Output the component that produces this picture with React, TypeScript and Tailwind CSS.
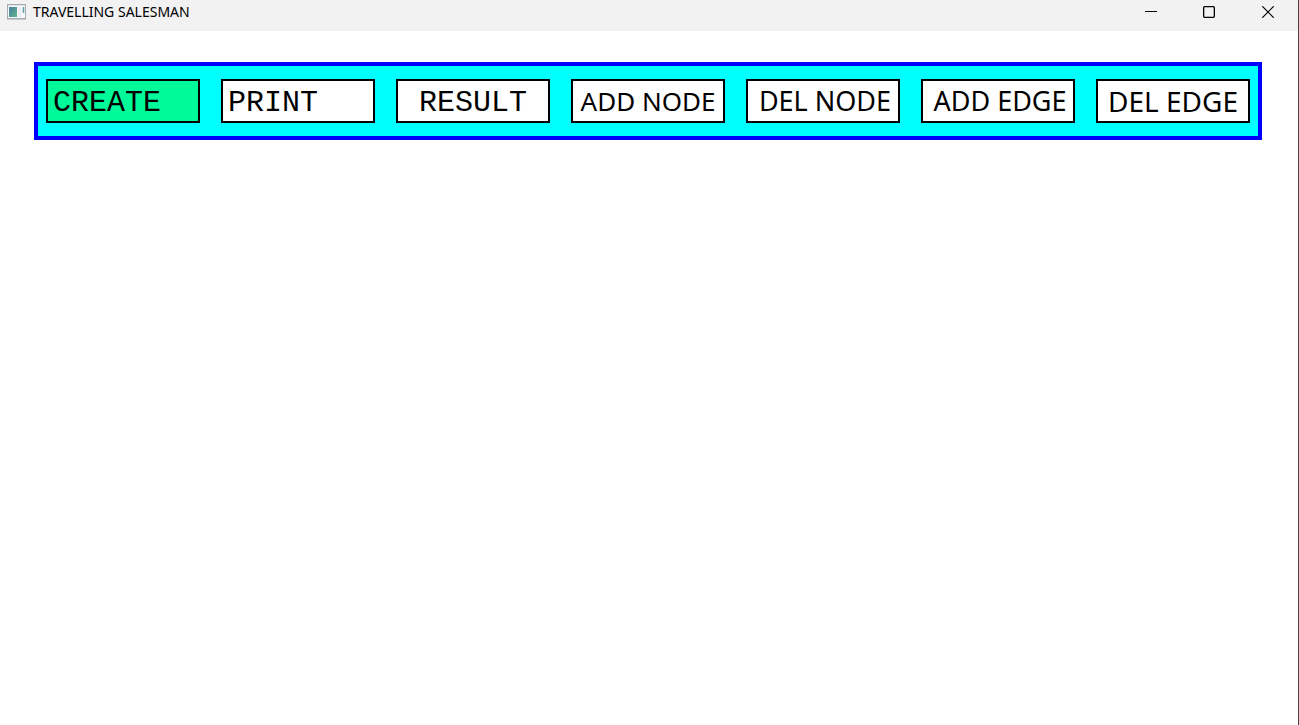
import React from "react";

type Action = { label: string; look: string };

const actions: Action[] = [
  { label: "CREATE", look: "bg-[#00fa9a] justify-start pt-1 pl-[5px] font-['Liberation_Mono',monospace] text-[30px]" },
  { label: "PRINT", look: "bg-white justify-start pt-1 pl-[5px] font-['Liberation_Mono',monospace] text-[30px]" },
  { label: "RESULT", look: "bg-white justify-center pt-1 font-['Liberation_Mono',monospace] text-[30px]" },
  { label: "ADD NODE", look: "bg-white justify-center font-['Noto_Sans',sans-serif] text-[26px]" },
  { label: "DEL NODE", look: "bg-white justify-center pl-1 font-['Noto_Sans',sans-serif] text-[27px]" },
  { label: "ADD EDGE", look: "bg-white justify-center pl-1 font-['Noto_Sans',sans-serif] text-[27px]" },
  { label: "DEL EDGE", look: "bg-white justify-center font-['Noto_Sans',sans-serif] text-[28px]" },
];

function AppIcon() {
  return (
    <svg width="19" height="16" viewBox="0 0 19 16" aria-hidden="true">
      <defs>
        <linearGradient id="pane" x1="0" y1="0" x2="1" y2="1">
          <stop offset="0" stopColor="#4a7fa5" />
          <stop offset="1" stopColor="#5cb584" />
        </linearGradient>
      </defs>
      <rect x="0.5" y="0.5" width="18" height="14" fill="#f8f9fb" stroke="#a5abb5" />
      <path d="M0 15.5h19" stroke="#c9ccd1" />
      <path d="M1 1.5h17" stroke="#dde3ea" />
      <rect x="2" y="3" width="8" height="10" fill="url(#pane)" />
      <rect x="11" y="3" width="4" height="10" fill="#eceef2" />
      <path d="M16.5 3v6" stroke="#5d9fa0" strokeWidth="1.5" />
    </svg>
  );
}

function TitleBar() {
  return (
    <header className="flex h-[31px] items-start justify-between bg-[#f2f2f2] pl-[7px]">
      <div className="flex h-6 items-center gap-[7px]">
        <AppIcon />
        <h1 className="font-['Noto_Sans',sans-serif] text-[14px] leading-6 text-black">
          TRAVELLING SALESMAN
        </h1>
      </div>
      <div className="flex h-6">
        <button type="button" aria-label="Minimize" className="flex w-[58px] items-center justify-center">
          <svg width="12" height="12" viewBox="0 0 12 12" fill="none" stroke="#000">
            <path d="M0 5.5h12" />
          </svg>
        </button>
        <button type="button" aria-label="Maximize" className="flex w-[58px] items-center justify-center">
          <svg width="12" height="12" viewBox="0 0 12 12" fill="none" stroke="#000" strokeWidth="1.3">
            <rect x="0.65" y="0.65" width="10.7" height="10.7" rx="1" />
          </svg>
        </button>
        <button type="button" aria-label="Close" className="flex w-[60px] items-center justify-center">
          <svg width="12" height="12" viewBox="0 0 12 12" fill="none" stroke="#000" strokeWidth="1.2">
            <path d="M0.3 0.3l11.4 11.4M11.7 0.3L0.3 11.7" />
          </svg>
        </button>
      </div>
    </header>
  );
}

export default function App() {
  return (
    <div className="flex min-h-screen flex-col border-r border-[#444444] bg-white">
      <TitleBar />
      <main className="flex-1 pt-[31px] pr-9 pl-[34px]">
        <nav
          aria-label="Graph actions"
          className="grid grid-cols-7 gap-[21px] border-4 border-[#0000ff] bg-[#00ffff] px-2 py-[13px]"
        >
          {actions.map(({ label, look }) => (
            <button
              key={label}
              type="button"
              className={`flex h-11 items-center border-2 border-black leading-10 whitespace-nowrap text-black ${look}`}
            >
              {label}
            </button>
          ))}
        </nav>
      </main>
    </div>
  );
}
